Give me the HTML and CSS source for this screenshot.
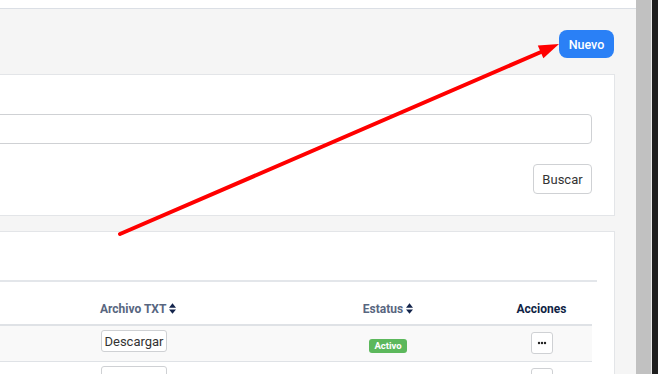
FILE: index.html
```html
<!DOCTYPE html>
<html lang="es">
<head>
    <meta charset="UTF-8">
    <meta name="viewport" content="width=device-width, initial-scale=1.0">
    <title>Archivos TXT</title>
    <link rel="stylesheet" href="styles.css">
</head>
<body>
    <div class="page">
        <div class="topbar"></div>

        <div class="page-head">
            <button class="btn-new">Nuevo</button>
        </div>

        <div class="card filter-card">
            <input type="text" class="search-input">
            <div class="filter-actions">
                <button class="btn-default btn-search">Buscar</button>
            </div>
        </div>

        <div class="card list-card">
            <div class="list-head"></div>
            <table class="grid">
                <colgroup>
                    <col class="col-first">
                    <col class="col-file">
                    <col class="col-status">
                    <col class="col-actions">
                </colgroup>
                <thead>
                    <tr>
                        <th></th>
                        <th class="sortable">Archivo TXT <svg class="sort-icon" viewBox="0 0 8 12"><path d="M4 0 L8 5 L0 5 Z M0 7 L8 7 L4 12 Z"/></svg></th>
                        <th class="sortable center">Estatus <svg class="sort-icon" viewBox="0 0 8 12"><path d="M4 0 L8 5 L0 5 Z M0 7 L8 7 L4 12 Z"/></svg></th>
                        <th class="center">Acciones</th>
                    </tr>
                </thead>
                <tbody>
                    <tr class="odd">
                        <td></td>
                        <td class="cell-file"><button class="btn-small">Descargar</button></td>
                        <td class="center cell-status"><span class="badge">Activo</span></td>
                        <td class="center cell-actions"><button class="btn-dots" aria-label="Acciones"><svg viewBox="0 0 20 20"><circle cx="7" cy="10" r="1.2"/><circle cx="10" cy="10" r="1.2"/><circle cx="13" cy="10" r="1.2"/></svg></button></td>
                    </tr>
                    <tr>
                        <td></td>
                        <td class="cell-file"><button class="btn-small"></button></td>
                        <td class="center cell-status"></td>
                        <td class="center cell-actions"><button class="btn-dots" aria-label="Acciones"></button></td>
                    </tr>
                </tbody>
            </table>
        </div>

        <!-- annotation arrow drawn over the page -->
        <svg class="arrow" viewBox="0 0 636 374">
            <line x1="120" y1="234" x2="541" y2="52" stroke="#f00" stroke-width="4" stroke-linecap="round"/>
            <polygon points="559,44 537.8,45.5 543.4,58.3" fill="#f00"/>
        </svg>
    </div>

    <div class="scrollbar">
        <div class="scroll-thumb"></div>
        <div class="scroll-gap"></div>
        <div class="scroll-edge"></div>
    </div>
</body>
</html>
```

FILE: styles.css
```css
body {
    margin: 0;
    font-family: Roboto, "Liberation Sans", sans-serif;
    display: flex;
    height: 374px;
    overflow: hidden;
    background: #f5f5f5;
}

.page {
    width: 636px;
    flex: none;
    background: #f5f5f5;
    position: relative;
    overflow: hidden;
}

.topbar {
    height: 8px;
    background: #fff;
    border-bottom: 1px solid #dbdfe5;
}

.page-head {
    height: 65px;
    box-sizing: border-box;
    padding: 21px 22px 0 0;
    display: flex;
    justify-content: flex-end;
    align-items: flex-start;
}

.btn-new {
    width: 55px;
    height: 28px;
    border: none;
    border-radius: 8px;
    background: #2a80f6;
    color: #fff;
    font-family: Roboto, "Liberation Sans", sans-serif;
    font-size: 12.5px;
    font-weight: 500;
    padding: 0;
}

.card {
    background: #fff;
    border: 1px solid #e3e5e8;
    margin: 0 21px 0 -300px;
}

.filter-card {
    padding: 39px 22px 21px 22px;
}

.search-input {
    display: block;
    width: 100%;
    height: 30px;
    box-sizing: border-box;
    border: 1px solid #cfd1d4;
    border-radius: 4px;
    margin: 0;
}

.filter-actions {
    display: flex;
    justify-content: flex-end;
    margin-top: 20px;
}

.btn-default {
    background: #fff;
    border: 1px solid #cfd1d4;
    border-radius: 4px;
    color: #333;
    font-family: Roboto, "Liberation Sans", sans-serif;
    font-size: 13px;
    padding: 0;
}

.btn-search {
    width: 59px;
    height: 30px;
}

.list-card {
    margin-top: 15px;
    height: 200px;
}

.list-head {
    height: 48px;
    border-bottom: 2px solid #e3e6ea;
    margin-right: 17px;
}

.grid {
    width: 869px;
    margin-left: 22px;
    border-collapse: collapse;
    table-layout: fixed;
    font-size: 13px;
}

.col-first { width: 370px; }
.col-file { width: 192px; }
.col-status { width: 206px; }
.col-actions { width: 101px; }

.grid th {
    height: 34px;
    padding: 0 7px 8px 7px;
    vertical-align: bottom;
    text-align: left;
    font-size: 12px;
    font-weight: 700;
    color: #0f1f45;
    border-bottom: 2px solid #dfe2e6;
    line-height: 14px;
}

.grid th.sortable {
    color: #58667f;
}

.grid .center {
    text-align: center;
}

.sort-icon {
    width: 7px;
    height: 11px;
    fill: #14254c;
    vertical-align: -1px;
}

.grid td {
    height: 36px;
    box-sizing: border-box;
    padding: 0 8px;
    vertical-align: top;
    border-bottom: 1px solid #dfe2e6;
}

.grid tr.odd td {
    background: #f9f9f9;
}

.grid td.cell-file {
    padding-top: 4px;
}

.grid td.cell-status {
    padding-top: 11px;
}

.grid td.cell-actions {
    padding-top: 6px;
}

.btn-small {
    height: 22px;
    width: 66px;
    padding: 0;
    background: #fff;
    border: 1px solid #cfd1d4;
    border-radius: 3px;
    color: #333;
    font-family: Roboto, "Liberation Sans", sans-serif;
    font-size: 13px;
    vertical-align: top;
}

.badge {
    display: inline-block;
    height: 14px;
    width: 38px;
    line-height: 14px;
    background: #5cb85c;
    color: #fff;
    font-size: 9.5px;
    font-weight: 700;
    border-radius: 3px;
}

.btn-dots {
    width: 22px;
    height: 22px;
    padding: 0;
    background: #fff;
    border: 1px solid #cfd1d4;
    border-radius: 3px;
    vertical-align: top;
}

.btn-dots svg {
    display: block;
    width: 20px;
    height: 20px;
    fill: #222;
}

.arrow {
    position: absolute;
    left: 0;
    top: 0;
    width: 636px;
    height: 374px;
    pointer-events: none;
}

.scrollbar {
    display: flex;
    flex: none;
    width: 22px;
}

.scroll-thumb {
    width: 15px;
    background: #c1c1c1;
}

.scroll-gap {
    width: 1px;
    background: #e9e9e9;
}

.scroll-edge {
    width: 6px;
    background: #1e1e1e;
}
```
